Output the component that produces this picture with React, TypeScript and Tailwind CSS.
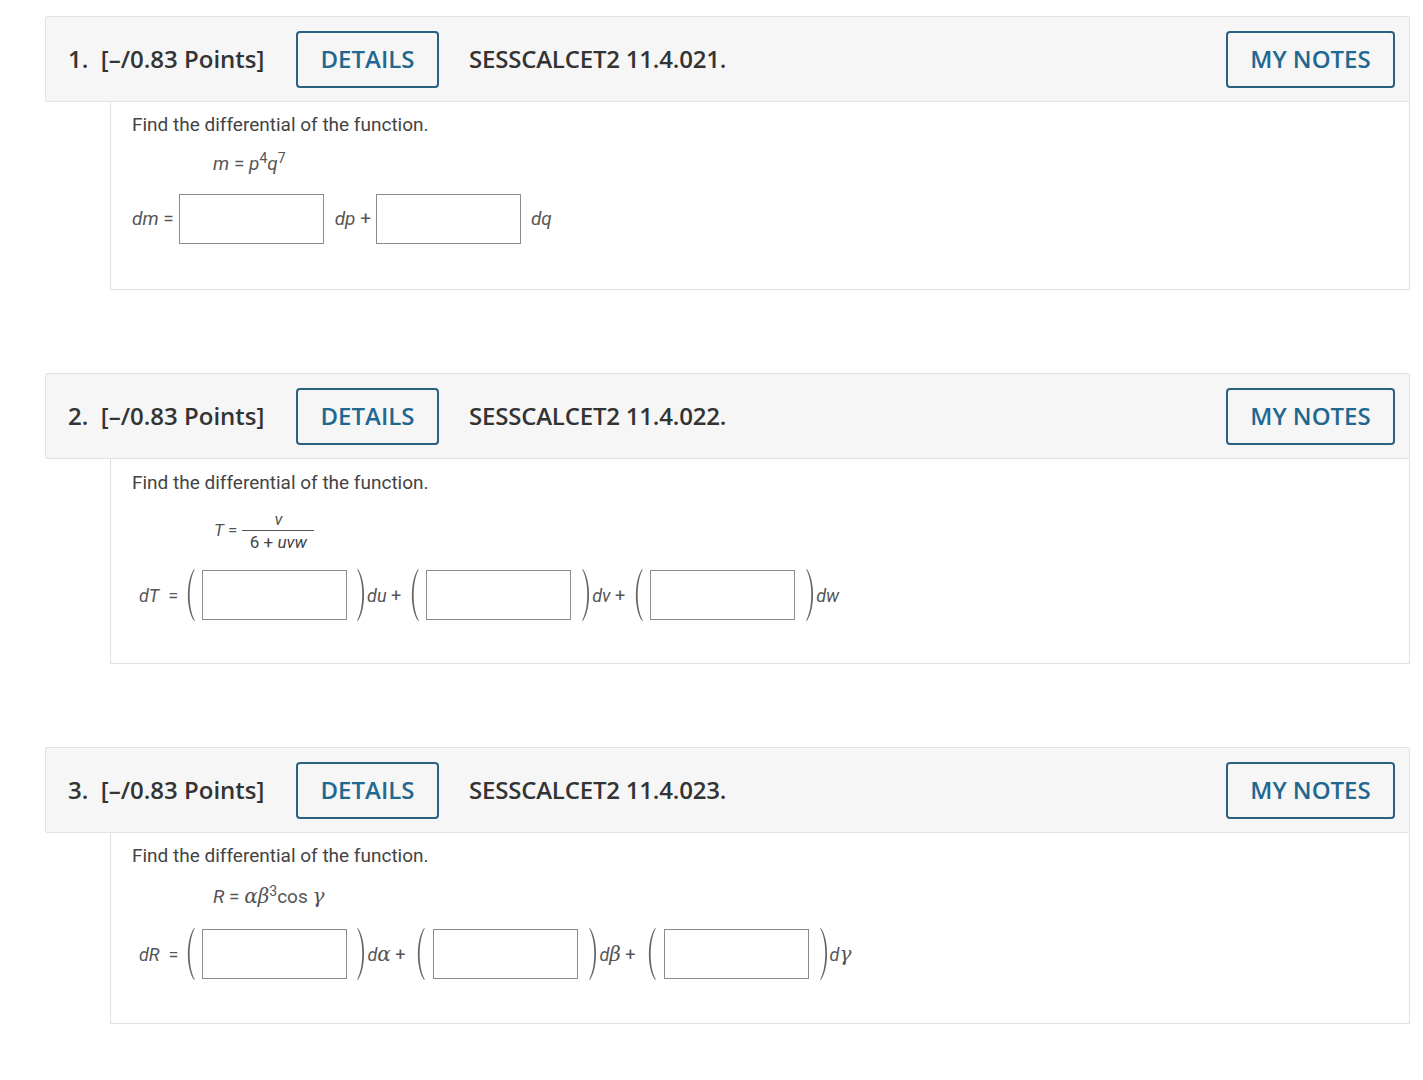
import React from "react";

const Paren = ({ close = false }: { close?: boolean }) => (
  <svg width="10" height="54" viewBox="0 0 10 54" className="shrink-0" style={{ transform: close ? "scaleX(-1)" : undefined }}>
    <path d="M9.2 1 C0.8 12 0.8 42 9.2 53 L9.8 52.4 C3 41 3 13 9.8 1.6 Z" fill="#666" />
  </svg>
);

const Box = () => <div className="w-[145px] h-[50px] border border-[#8c8c8c] bg-white shrink-0" />;

const mathFont = { fontFamily: "Roboto, 'Noto Sans', sans-serif" };
const greek = { fontFamily: "'DejaVu Serif', serif", fontSize: "20px" };

const Header = ({ n, code }: { n: number; code: string }) => (
  <div
    className="h-[86px] border border-[#e3e3e3] bg-[#f6f6f6] rounded-[2px] flex items-center pl-[22px] pr-[14px] text-[#333]"
    style={{ fontFamily: "'Open Sans', sans-serif" }}
  >
    <div className="w-[198px] text-[24px] font-semibold whitespace-nowrap">
      {n}.&nbsp;&nbsp;[–/0.83 Points]
    </div>
    <button className="ml-[30px] w-[143px] h-[57px] border-2 border-[#2b6080] rounded-[4px] text-[24px] font-semibold text-[#1f6890] flex items-center justify-center">
      DETAILS
    </button>
    <div className="ml-[30px] text-[24px] font-semibold whitespace-nowrap tracking-[-0.2px]">{code}</div>
    <div className="flex-1" />
    <button className="w-[169px] h-[57px] border-2 border-[#2b6080] rounded-[4px] text-[24px] font-semibold text-[#1f6890] flex items-center justify-center">
      MY NOTES
    </button>
  </div>
);

const Find = () => (
  <div className="h-[24px] leading-[24px] text-[19px] text-[#444]" style={mathFont}>
    Find the differential of the function.
  </div>
);

export default function App() {
  return (
    <div className="w-[1423px] min-h-[1080px] bg-white pt-[16px]">
      <div className="ml-[45px] w-[1365px]">
        {/* Q1 */}
        <Header n={1} code="SESSCALCET2 11.4.021." />
        <div className="ml-[65px] border-l border-r border-b border-[#e0e0e0] pl-[21px] pt-[11px] pb-[45px]">
          <Find />
          <div className="mt-[15px] h-[24px] leading-[24px] pl-[81px] text-[19px] text-[#555]" style={mathFont}>
            <i>m</i> = <i>p</i>
            <sup className="text-[14px]">4</sup>
            <i>q</i>
            <sup className="text-[14px]">7</sup>
          </div>
          <div className="mt-[18px] flex items-center text-[19px] text-[#555]" style={mathFont}>
            <span className="mr-[5px]">
              <i>dm</i> =
            </span>
            <Box />
            <span className="ml-[11px] mr-[5px]">
              <i>dp</i> +
            </span>
            <Box />
            <span className="ml-[10px]">
              <i>dq</i>
            </span>
          </div>
        </div>

        {/* Q2 */}
        <div className="mt-[83px]">
          <Header n={2} code="SESSCALCET2 11.4.022." />
          <div className="ml-[65px] border-l border-r border-b border-[#e0e0e0] pl-[21px] pt-[12px] pb-[41px]">
            <Find />
            <div className="mt-[14px] flex items-center pl-[82px] text-[17px] text-[#555]" style={mathFont}>
              <span className="mr-[5px]">
                <i>T</i> =
              </span>
              <div className="flex flex-col items-center">
                <div className="h-[21px] leading-[21px] px-[2px]">
                  <i>v</i>
                </div>
                <div className="w-[72px] h-px bg-[#555]" />
                <div className="h-[22px] leading-[22px] text-[#444]">
                  6 + <i>uvw</i>
                </div>
              </div>
            </div>
            <div className="mt-[15px] pl-[7px] flex items-center text-[18px] text-[#555]" style={mathFont}>
              <span className="mr-[7px]">
                <i>dT</i>&nbsp; =
              </span>
              <Paren />
              <span className="w-[7px]" />
              <Box />
              <span className="w-[10px]" />
              <Paren close />
              <span className="text-[18px] mr-[8px]">
                <i>du</i> +
              </span>
              <Paren />
              <span className="w-[7px]" />
              <Box />
              <span className="w-[11px]" />
              <Paren close />
              <span className="text-[18px] mr-[8px]">
                <i>dv</i> +
              </span>
              <Paren />
              <span className="w-[7px]" />
              <Box />
              <span className="w-[11px]" />
              <Paren close />
              <span className="text-[18px]">
                <i>dw</i>
              </span>
            </div>
          </div>
        </div>

        {/* Q3 */}
        <div className="mt-[83px]">
          <Header n={3} code="SESSCALCET2 11.4.023." />
          <div className="ml-[65px] border-l border-r border-b border-[#e0e0e0] pl-[21px] pt-[11px] pb-[42px]">
            <Find />
            <div className="mt-[16px] h-[24px] leading-[24px] pl-[81px] text-[19px] text-[#555]" style={mathFont}>
              <i>R</i> = <i style={greek}>α</i>
              <i style={greek}>β</i>
              <sup className="text-[14px]">3</sup>cos <i style={greek}>γ</i>
            </div>
            <div className="mt-[19px] pl-[7px] flex items-center text-[18px] text-[#555]" style={mathFont}>
              <span className="mr-[7px]">
                <i>dR</i>&nbsp; =
              </span>
              <Paren />
              <span className="w-[7px]" />
              <Box />
              <span className="w-[10px]" />
              <Paren close />
              <span className="text-[18px] mr-[10px]">
                <i>d</i>
                <i style={greek}>α</i>&nbsp;+
              </span>
              <Paren />
              <span className="w-[8px]" />
              <Box />
              <span className="w-[11px]" />
              <Paren close />
              <span className="text-[18px] mr-[10px]">
                <i>d</i>
                <i style={greek}>β</i>&nbsp;+
              </span>
              <Paren />
              <span className="w-[8px]" />
              <Box />
              <span className="w-[11px]" />
              <Paren close />
              <span className="text-[18px]">
                <i>d</i>
                <i style={greek}>γ</i>
              </span>
            </div>
          </div>
        </div>
      </div>
    </div>
  );
}
